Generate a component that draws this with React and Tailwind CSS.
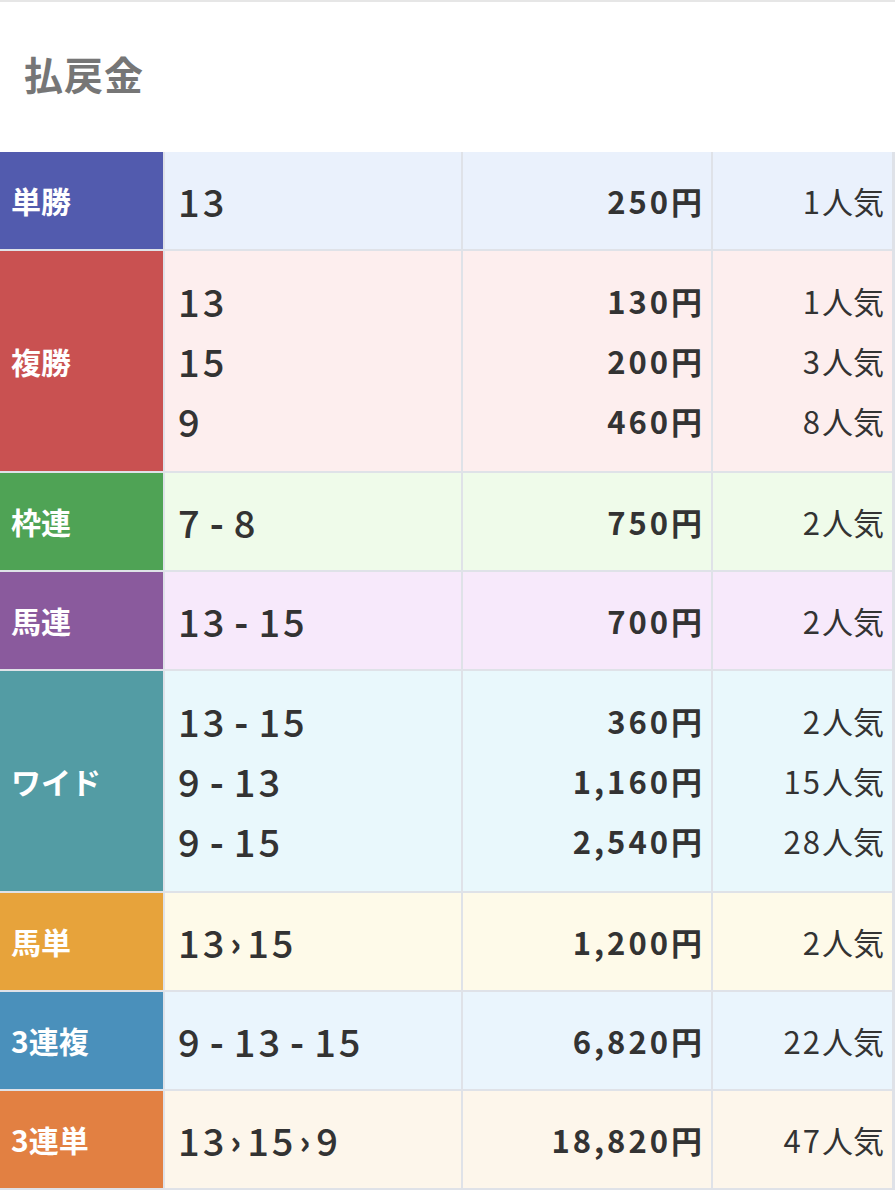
const rows = [
  { label: '単勝', labelBg: 'bg-[#525bae]', rowBg: 'bg-[#eaf1fc]', items: [['13', '250', '1']] },
  {
    label: '複勝',
    labelBg: 'bg-[#c95151]',
    rowBg: 'bg-[#fdeeee]',
    items: [
      ['13', '130', '1'],
      ['15', '200', '3'],
      ['9', '460', '8'],
    ],
  },
  { label: '枠連', labelBg: 'bg-[#4fa355]', rowBg: 'bg-[#effbea]', items: [['7-8', '750', '2']] },
  { label: '馬連', labelBg: 'bg-[#8a5a9d]', rowBg: 'bg-[#f7e9fb]', items: [['13-15', '700', '2']] },
  {
    label: 'ワイド',
    labelBg: 'bg-[#539ca4]',
    rowBg: 'bg-[#e9f8fc]',
    items: [
      ['13-15', '360', '2'],
      ['9-13', '1,160', '15'],
      ['9-15', '2,540', '28'],
    ],
  },
  { label: '馬単', labelBg: 'bg-[#e7a33b]', rowBg: 'bg-[#fefae9]', items: [['13>15', '1,200', '2']] },
  { label: '3連複', labelBg: 'bg-[#4a90bb]', rowBg: 'bg-[#eaf5fd]', items: [['9-13-15', '6,820', '22']] },
  { label: '3連単', labelBg: 'bg-[#e28042]', rowBg: 'bg-[#fdf6eb]', items: [['13>15>9', '18,820', '47']] },
];

// split "13-15" / "13>15" into numbers and separators
const Combo = ({ value }) => {
  const parts = value.split(/([->])/);
  return (
    <span className="inline-flex items-center">
      {parts.map((p, i) => {
        if (p === '-') return <span key={i} className="mr-[10px] ml-[7px] font-bold">-</span>;
        if (p === '>') return <span key={i} className="mr-[6px] ml-[3px] text-[32px] font-black">›</span>;
        return <span key={i} className="tracking-[3px]">{p}</span>;
      })}
    </span>
  );
};

const rowH = (n) => (n > 1 ? 'h-[220px]' : 'h-[97px]');

export default function App() {
  return (
    <div className="w-[895px] bg-white font-['Noto_Sans_CJK_JP','Noto_Sans',sans-serif] text-[#333]">
      <div className="h-[2px] bg-[#e6e6e6]" />
      <div className="h-[150px] flex items-center px-[24px] pb-[8px]">
        <h2 className="text-[39px] font-bold text-[#767676] tracking-[1px]">払戻金</h2>
      </div>

      {/* payout table */}
      <div className="grid grid-cols-[163px_296px_248px_179px] gap-[2px] bg-[#dfe2e8] pr-[3px] pb-[2px]">
        {rows.map((row) => (
          <div key={row.label} className="contents">
            <div className={`${rowH(row.items.length)} ${row.labelBg} flex items-center pl-[11px] text-white text-[30px] font-bold`}>
              {row.label}
            </div>
            <div className={`${row.rowBg} flex flex-col justify-center pl-[13px] text-[38px] font-medium leading-[60px]`}>
              {row.items.map((it, i) => (
                <div key={i}>
                  <Combo value={it[0]} />
                </div>
              ))}
            </div>
            <div className={`${row.rowBg} flex flex-col justify-center items-end pr-[9px] text-[31px] font-bold leading-[60px]`}>
              {row.items.map((it, i) => (
                <div key={i}>
                  <span className="tracking-[3px]">{it[1]}</span>円
                </div>
              ))}
            </div>
            <div className={`${row.rowBg} flex flex-col justify-center items-end pr-[8px] text-[31px] leading-[60px]`}>
              {row.items.map((it, i) => (
                <div key={i}>
                  <span className="tracking-[2px]">{it[2]}</span>人気
                </div>
              ))}
            </div>
          </div>
        ))}
      </div>
      <div className="h-[8px]" />
    </div>
  );
}
